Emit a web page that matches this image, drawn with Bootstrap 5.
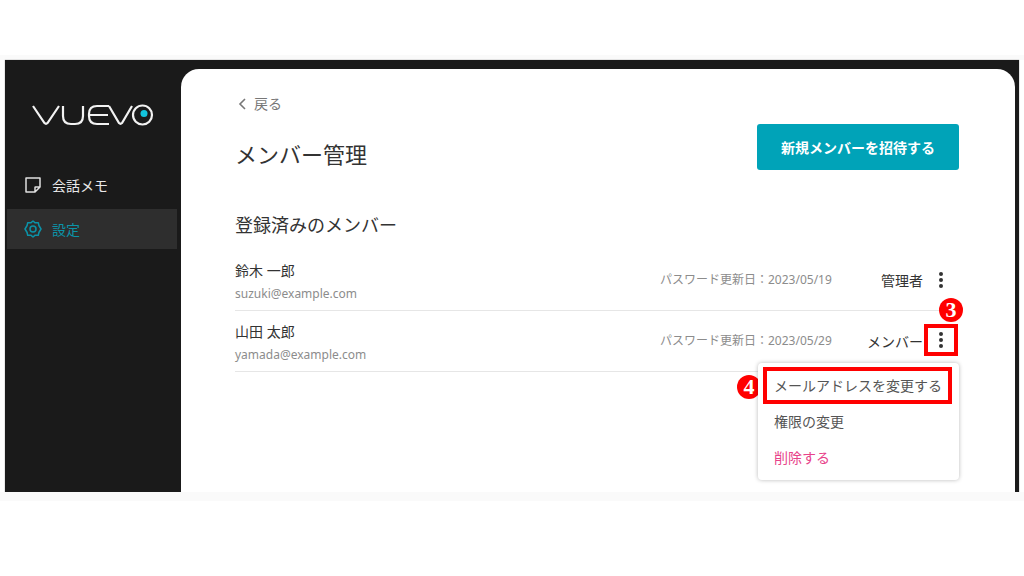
<!DOCTYPE html>
<html lang="ja">
<head>
  <meta charset="UTF-8">
  <meta name="viewport" content="width=1024">
  <title>メンバー管理</title>
  <link href="https://cdn.jsdelivr.net/npm/bootstrap@5.3.3/dist/css/bootstrap.min.css" rel="stylesheet">
  <style>
    html, body { height: 576px; overflow: hidden; }
    body { font-family: "Noto Sans", "Noto Sans CJK JP", sans-serif; background: #fff; color: #333; }
    .shot { padding-top: 55px; }
    .strip-top { height: 5px; background: #fafafa; }
    .strip-bottom { height: 9px; background: #fafafa; }
    .frame { margin: 0 5px; height: 432px; background: #1a1a1a; padding: 9px 4px 0 0; box-shadow: 0 0 1px #777; }
    .side { width: 176px; flex: none; }
    .side-logo { padding: 35px 0 0 27px; height: 93px; }
    .side-logo svg { display: block; }
    .side-nav { margin-left: 2px; width: 170px; }
    .side-link { display: flex; align-items: center; gap: 10px; height: 40px; padding: 0 0 0 17px; font-size: 14px; color: #e8e8e8; text-decoration: none; margin-top: 3px; }
    .side-link.on { background: #2e2e2e; color: #0b93a8; margin-top: 4px; }
    .panel { background: #fff; border-radius: 18px 18px 0 0; padding: 23px 56px 0 54px; min-width: 0; }
    .back-link { font-size: 14px; color: #777; text-decoration: none; line-height: 20px; gap: 7px; padding-left: 3px; }
    .page-title { font-size: 22px; font-weight: 400; color: #333; margin: 15px 0 0; line-height: 30px; }
    .head-row { margin-top: 8px; height: 56px; }
    .btn-invite { width: 202px; height: 46px; background: #00a3b8; border: 0; border-radius: 3px; color: #fff; font-size: 14px; font-weight: 700; }
    .sec-title { font-size: 18px; font-weight: 400; color: #333; margin: 31px 0 0; line-height: 28px; }
    .mem-list { margin-top: 11px; }
    .mem-row { height: 61px; border-bottom: 1px solid #e6e6e6; }
    .mem-text { padding-top: 4px; }
    .mem-name { font-size: 14px; line-height: 20px; color: #333; }
    .mem-mail { font-size: 12px; line-height: 18px; color: #8c8c8c; margin-top: 4px; }
    .mem-date { font-size: 12px; color: #8c8c8c; width: 171px; white-space: nowrap; }
    .mem-role { font-size: 14px; color: #333; width: 92px; text-align: right; white-space: nowrap; }
    .kebab { width: 34px; height: 32px; display: flex; align-items: center; justify-content: center; margin: 0 1px 0 1px; }
    .kebab.mark-red { outline: 4px solid #f00; outline-offset: -4px; margin-top: -2px; }
    .pop-menu { right: 0; width: 201px; height: 117px; padding: 4px 0 0; border: 0; border-radius: 4px; box-shadow: 0 0 4px rgba(0,0,0,.28); margin: 0; }
    .pop-menu .dropdown-item { font-size: 14px; line-height: 36px; padding: 0 0 0 16px; color: #555; }
    .pop-menu .dropdown-item.danger { color: #e8438a; }
    .pop-menu .dropdown-item.mark-red { outline: 4px solid #f00; outline-offset: 0; margin: 4px 11px 4px 9px; padding: 0 0 0 7px; width: auto; line-height: 29px; }
    .num-pin { position: absolute; width: 24px; height: 24px; border-radius: 50%; background: #f00; color: #fff; font: 700 22px/24px "Liberation Serif", serif; text-align: center; }
    .num-three { top: 218px; right: -5px; margin-right: 1px; }
    .num-four { top: 295px; right: 198px; }
    .overlay-box { left: 236px; top: 80px; width: 723px; height: 0; }
    .pop-place { top: 283px; }
  </style>
</head>
<body>
  <div class="shot">
    <div class="strip-top"></div>
    <div class="frame d-flex">
      <aside class="side">
        <div class="side-logo">
          <svg width="122" height="22" viewBox="0 0 122 22" fill="none" stroke="#f2f2f2" stroke-width="2.200" role="img" aria-label="VUEVO">
            <path d="M1 2 L12.500 19 Q14 20.500 15.500 19 L27 2"/>
            <path d="M31 2 V12 Q31 20 39 20 H43 Q51 20 51 12 V2"/>
            <path d="M77 2 H65 Q57 2 57 10 V12 Q57 20 65 20 H77 M58 11 H76"/>
            <path d="M77 2 L87 19 Q88.500 20.500 90 19 L100 2"/>
            <circle cx="110.500" cy="11" r="9.500"/>
            <circle cx="112" cy="9.500" r="3.500" fill="#12c4dc" stroke="none"/>
          </svg>
        </div>
        <nav class="side-nav">
          <a class="side-link" href="#">
            <svg width="18" height="18" viewBox="0 0 18 18" fill="none" stroke="#e0e0e0" stroke-width="1.500" stroke-linejoin="round"><path d="M2 2 H16 V11 L11 16 H2 Z M16 11 H11.500 Q11 11 11 11.500 V16"/></svg>
            <span>会話メモ</span>
          </a>
          <a class="side-link on" href="#">
            <svg width="18" height="18" viewBox="0 0 18 18" fill="none" stroke="#0b93a8" stroke-width="1.500" stroke-linejoin="round"><path d="M9 1 L11.200 2.800 L14.300 2.700 L14.900 5.500 L17 9 L14.900 12.500 L14.300 15.300 L11.200 15.200 L9 17 L6.800 15.200 L3.700 15.300 L3.100 12.500 L1 9 L3.100 5.500 L3.700 2.700 L6.800 2.800 Z"/><circle cx="9" cy="9" r="3"/></svg>
            <span>設定</span>
          </a>
        </nav>
      </aside>
      <main class="panel flex-grow-1">
        <a class="back-link d-inline-flex align-items-center" href="#">
          <svg width="9" height="12" viewBox="0 0 9 12" fill="none" stroke="#777" stroke-width="1.600"><path d="M7 1 L2 6 L7 11"/></svg>
          <span>戻る</span>
        </a>
        <div class="head-row d-flex justify-content-between align-items-start">
          <h1 class="page-title">メンバー管理</h1>
          <button type="button" class="btn btn-invite">新規メンバーを招待する</button>
        </div>
        <h2 class="sec-title">登録済みのメンバー</h2>
        <div class="mem-list position-relative">
          <div class="mem-row d-flex align-items-center">
            <div class="flex-grow-1 mem-text">
              <div class="mem-name">鈴木 一郎</div>
              <div class="mem-mail">suzuki@example.com</div>
            </div>
            <div class="mem-date">パスワード更新日：2023/05/19</div>
            <div class="mem-role">管理者</div>
            <div class="kebab"><svg width="4" height="16" viewBox="0 0 4 16" fill="#333"><circle cx="2" cy="2" r="2"/><circle cx="2" cy="8" r="2"/><circle cx="2" cy="14" r="2"/></svg></div>
          </div>
          <div class="mem-row d-flex align-items-center">
            <div class="flex-grow-1 mem-text">
              <div class="mem-name">山田 太郎</div>
              <div class="mem-mail">yamada@example.com</div>
            </div>
            <div class="mem-date">パスワード更新日：2023/05/29</div>
            <div class="mem-role">メンバー</div>
            <div class="kebab mark-red"><svg width="4" height="16" viewBox="0 0 4 16" fill="#333"><circle cx="2" cy="2" r="2"/><circle cx="2" cy="8" r="2"/><circle cx="2" cy="14" r="2"/></svg></div>
          </div>
        </div>
      </main>
    </div>
    <div class="strip-bottom"></div>
  </div>
  <!-- menu and numbered pins lie over the page -->
  <div class="position-absolute overlay-box">
    <ul class="dropdown-menu show pop-menu pop-place position-absolute list-unstyled">
      <li><a class="dropdown-item mark-red" href="#">メールアドレスを変更する</a></li>
      <li><a class="dropdown-item" href="#">権限の変更</a></li>
      <li><a class="dropdown-item danger" href="#">削除する</a></li>
    </ul>
    <span class="num-pin num-three">3</span>
    <span class="num-pin num-four">4</span>
  </div>
  <script src="https://cdn.jsdelivr.net/npm/bootstrap@5.3.3/dist/js/bootstrap.bundle.min.js"></script>
</body>
</html>
